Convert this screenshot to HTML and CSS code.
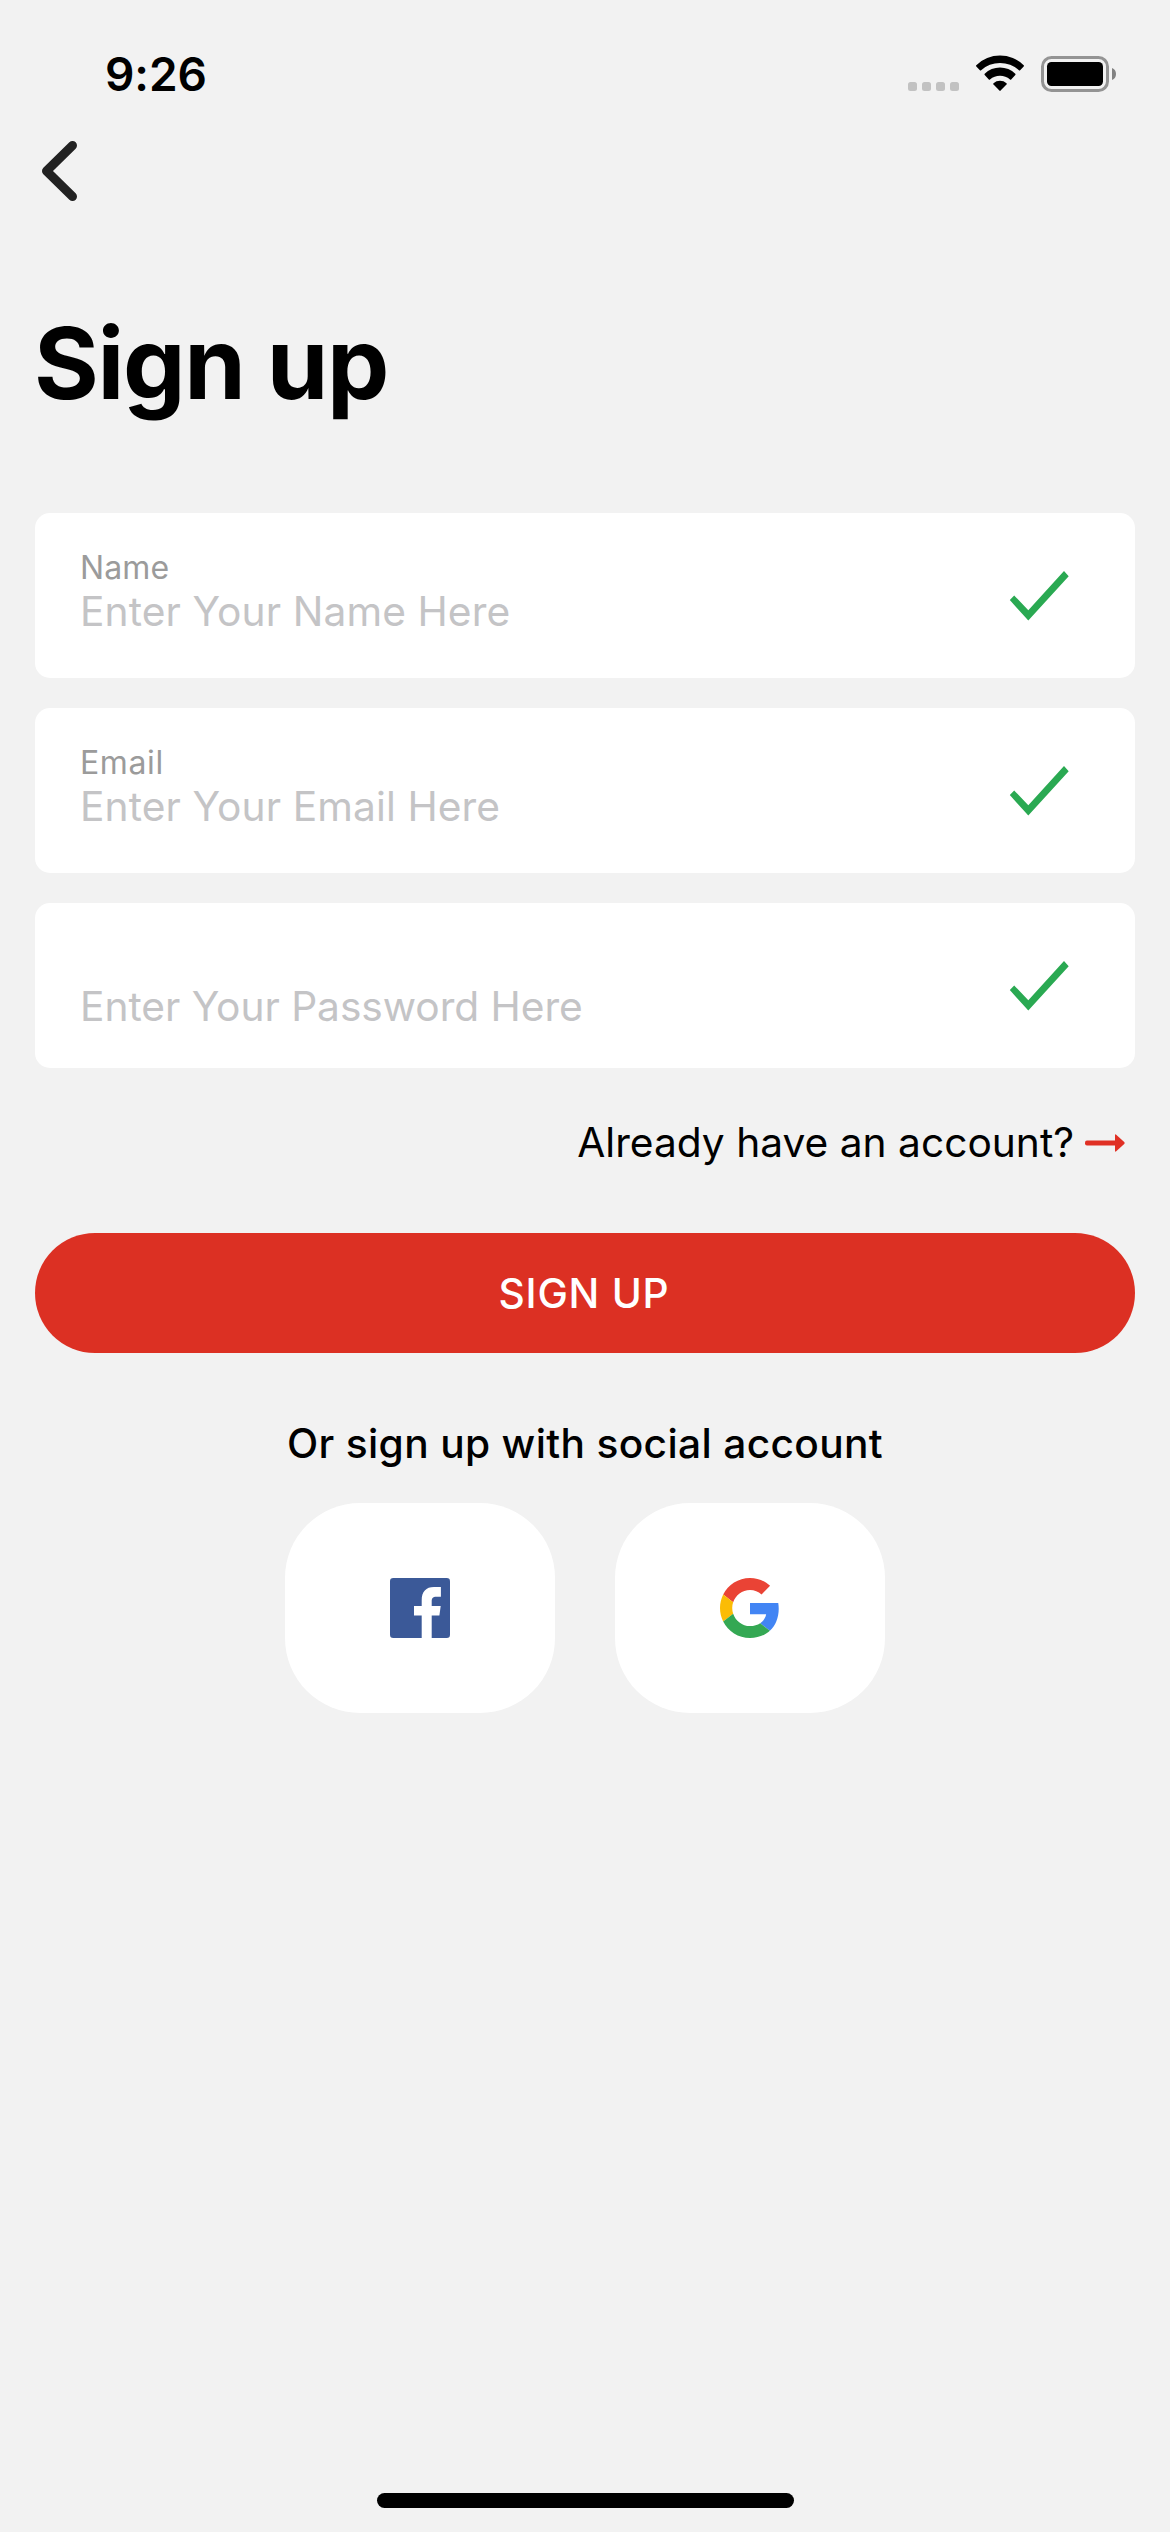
FILE: index.html
```html
<!DOCTYPE html>
<html lang="en">
<head>
<meta charset="utf-8">
<title>Sign up</title>
<link rel="stylesheet" href="styles.css">
</head>
<body>
<svg class="symbols" aria-hidden="true">
  <symbol id="check" viewBox="0 0 60 50"><path fill="#2aa952" d="M.8 29 5.2 24.4 19.3 39.2 55 0l4.7 5.2L19.3 49.6z"/></symbol>
</svg>

<header class="status-bar">
  <span class="time">9:26</span>
  <div class="status-icons">
    <svg width="52" height="37" viewBox="0 0 52 37" fill="#c2c2c2">
      <rect x="0" y="27" width="9" height="9" rx="2.5"/><rect x="14" y="27" width="9" height="9" rx="2.5"/><rect x="28" y="27" width="9" height="9" rx="2.5"/><rect x="42" y="27" width="9" height="9" rx="2.5"/>
    </svg>
    <svg width="48" height="37" viewBox="0 0 48 37">
      <path d="M.3 10.2a34 34 0 0 1 47.4 0q.6.6 0 1.2l-3.6 3.9q-.6.6-1.2 0a28 28 0 0 0-37.8 0q-.6.6-1.2 0L.3 11.4q-.6-.6 0-1.2z"/>
      <path d="M8.7 18.8a21.6 21.6 0 0 1 30.6 0q.6.6 0 1.2l-4.1 4.4q-.6.6-1.2 0a15.5 15.5 0 0 0-20 0q-.6.6-1.2 0L8.7 20q-.6-.6 0-1.2z"/>
      <path d="M17.5 28.2a9.8 9.8 0 0 1 13 0q.6.6 0 1.3L24.6 35.6q-.6.6-1.2 0L17.5 29.500q-.6-.7 0-1.3z"/>
    </svg>
    <svg width="76" height="37" viewBox="0 0 76 37">
      <rect x="2.500" y="2.500" width="65" height="33" rx="9" fill="none" stroke="#949494" stroke-width="3"/>
      <rect x="7" y="7" width="56" height="24" rx="4.500"/>
      <path d="M72 13q4 1.600 4 6t-4 6z" fill="#828282"/>
    </svg>
  </div>
</header>

<nav class="nav">
  <svg width="44" height="62" viewBox="0 0 44 62">
    <path d="M37.500 5.500 11.500 31l26 25.500" fill="none" stroke="#222" stroke-width="9" stroke-linecap="round" stroke-linejoin="round"/>
  </svg>
</nav>

<main class="content">
  <h1 class="title">Sign up</h1>

  <section class="fields">
    <div class="field">
      <div class="field-text">
        <span class="label label-name">Name</span>
        <span class="placeholder">Enter Your Name Here</span>
      </div>
      <svg class="check" width="60" height="50"><use href="#check"/></svg>
    </div>
    <div class="field">
      <div class="field-text">
        <span class="label label-email">Email</span>
        <span class="placeholder">Enter Your Email Here</span>
      </div>
      <svg class="check" width="60" height="50"><use href="#check"/></svg>
    </div>
    <div class="field">
      <div class="field-text field-text-single">
        <span class="placeholder placeholder-password">Enter Your Password Here</span>
      </div>
      <svg class="check" width="60" height="50"><use href="#check"/></svg>
    </div>
  </section>

  <a class="login-link">
    <span>Already have an account?</span>
    <svg width="40" height="18" viewBox="0 0 40 18" fill="#e03024">
      <rect x="0" y="6.500" width="34" height="5" rx="2"/>
      <path d="M30 1.200q0-1.400 1.200-.5l8 7.300q.9 1 0 2l-8 7.300q-1.200.9-1.200-.5z"/>
    </svg>
  </a>

  <button class="submit">SIGN UP</button>

  <p class="social-title">Or sign up with social account</p>

  <div class="social">
    <div class="social-card">
      <svg width="60" height="60" viewBox="0 0 60 60">
        <rect width="60" height="60" rx="3.300" fill="#3b5998"/>
        <path fill="#fff" d="M31.700 60V37.500H24V28h7.700v-5.500C31.700 13.500 36 9 44 9h6.900v9.700h-4.300c-4.200 0-4.900 1.700-4.900 4.800V28h9l-1.300 9.500h-7.700V60z"/>
      </svg>
    </div>
    <div class="social-card">
      <svg width="60" height="60" viewBox="0 0 48 48">
        <path fill="#EA4335" d="M24 9.500c3.540 0 6.710 1.220 9.210 3.600l6.850-6.850C35.900 2.380 30.470 0 24 0 14.620 0 6.510 5.380 2.560 13.220l7.980 6.190C12.430 13.720 17.740 9.500 24 9.500z"/>
        <path fill="#4285F4" d="M46.980 24.550c0-1.570-.15-3.090-.38-4.550H24v9.020h12.940c-.58 2.960-2.260 5.480-4.780 7.180l7.730 6c4.510-4.180 7.090-10.360 7.090-17.650z"/>
        <path fill="#FBBC05" d="M10.530 28.590c-.48-1.450-.76-2.990-.76-4.590s.27-3.140.76-4.590l-7.980-6.190C.92 16.460 0 20.120 0 24c0 3.880.92 7.540 2.560 10.780l7.970-6.190z"/>
        <path fill="#34A853" d="M24 48c6.480 0 11.930-2.130 15.890-5.810l-7.730-6c-2.150 1.450-4.920 2.300-8.160 2.300-6.260 0-11.570-4.220-13.470-9.910l-7.980 6.190C6.510 42.620 14.620 48 24 48z"/>
      </svg>
    </div>
  </div>
</main>

<footer class="home"><div class="home-indicator"></div></footer>
</body>
</html>
```
FILE: styles.css
```css
* {
  box-sizing: border-box;
}

body {
  margin: 0;
  width: 1170px;
  height: 2532px;
  display: flex;
  flex-direction: column;
  background: #f2f2f2;
  color: #000;
  font-family: "Inter", "Liberation Sans", sans-serif;
}

svg {
  display: block;
  flex: none;
}

.symbols {
  display: none;
}

.status-bar {
  height: 132px;
  display: flex;
  justify-content: space-between;
  align-items: flex-start;
  padding: 46px 54px 0 105px;
}

.time {
  font-size: 46px;
  line-height: 56px;
  font-weight: 600;
  letter-spacing: -0.1px;
}

.status-icons {
  display: flex;
  gap: 16px;
  padding-top: 9px;
}

.nav {
  height: 171px;
  padding: 8px 35px 0;
}

.content {
  flex: 1;
  display: flex;
  flex-direction: column;
  padding: 0 35px;
}

.title {
  margin: 0 0 90px -1px;
  font-size: 99px;
  line-height: 120px;
  font-weight: 700;
  letter-spacing: -1.3px;
}

.fields {
  display: flex;
  flex-direction: column;
  gap: 30px;
}

.field {
  height: 165px;
  display: flex;
  align-items: center;
  justify-content: space-between;
  padding: 0 66px 0 45px;
  background: #fff;
  border-radius: 15px;
}

.field-text {
  align-self: flex-start;
  display: flex;
  flex-direction: column;
  padding-top: 36px;
}

.field-text-single {
  padding-top: 79px;
}

.label {
  font-size: 32px;
  line-height: 38px;
  color: #9b9b9b;
}

.label-name {
  letter-spacing: 0.13px;
}

.label-email {
  letter-spacing: 0.6px;
}

.placeholder {
  font-size: 40.7px;
  line-height: 50px;
  letter-spacing: 0.1px;
  color: #c4c4c6;
}

.placeholder-password {
  letter-spacing: -0.04px;
}

.login-link {
  display: flex;
  align-items: center;
  justify-content: flex-end;
  gap: 11px;
  margin-top: 50px;
  padding-right: 10px;
  font-size: 40.7px;
  line-height: 50px;
}

.submit {
  height: 120px;
  margin: 65px 0 0;
  padding: 1px 2px 0 0;
  border: 0;
  border-radius: 60px;
  background: #dc3023;
  color: #fff;
  font-family: inherit;
  font-size: 40.7px;
  line-height: 119px;
  font-weight: 500;
  letter-spacing: 0.75px;
}

.social-title {
  margin: 66px 0 34px;
  font-size: 40.7px;
  line-height: 50px;
  font-weight: 500;
  letter-spacing: 0.33px;
  text-align: center;
}

.social {
  display: flex;
  justify-content: center;
  gap: 60px;
}

.social-card {
  width: 270px;
  height: 210px;
  display: flex;
  align-items: center;
  justify-content: center;
  background: #fff;
  border-radius: 75px;
}

.home {
  display: flex;
  justify-content: center;
  padding: 0 0 24px 1px;
}

.home-indicator {
  width: 417px;
  height: 15px;
  border-radius: 8px;
  background: #000;
}
```
